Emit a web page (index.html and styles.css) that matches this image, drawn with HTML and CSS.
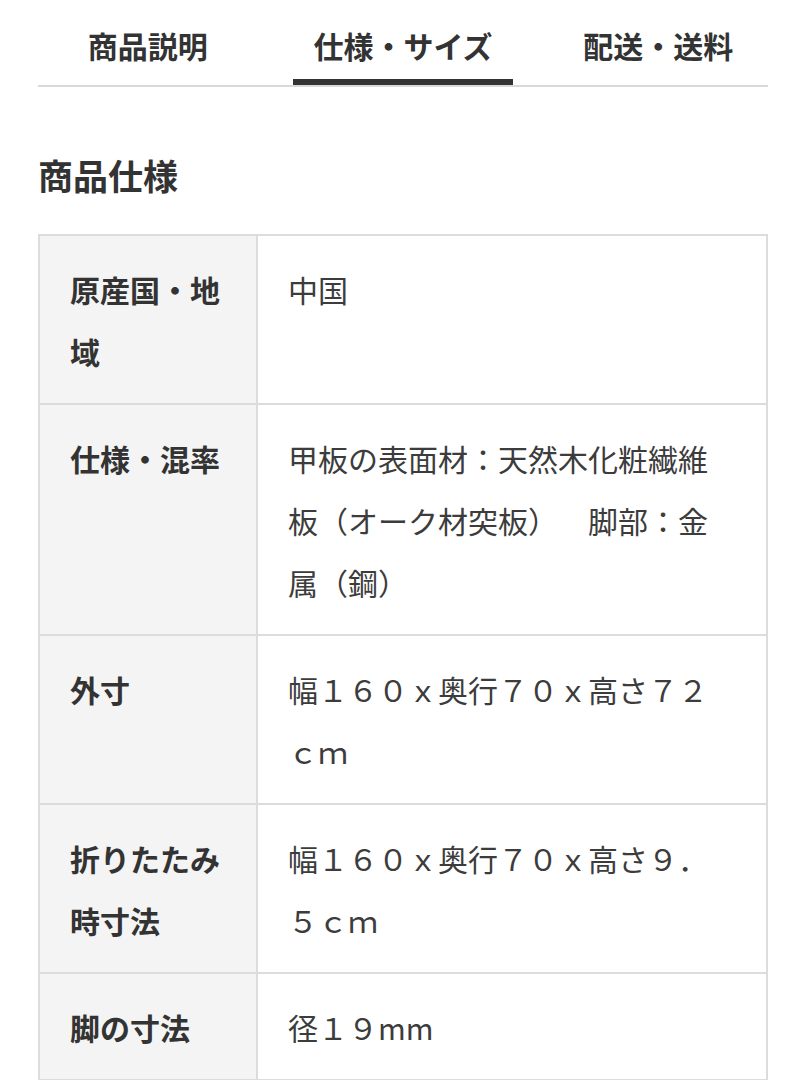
FILE: index.html
```html
<!DOCTYPE html>
<html lang="ja">
<head>
<meta charset="utf-8">
<title>商品仕様</title>
<link rel="stylesheet" href="styles.css">
</head>
<body>
<div class="page">
  <nav class="tabs">
    <div class="tab">商品説明</div>
    <div class="tab active">仕様・サイズ</div>
    <div class="tab">配送・送料</div>
  </nav>
  <h2 class="heading">商品仕様</h2>
  <div class="spec">
    <div class="label">原産国・地域</div>
    <div class="value">中国</div>
    <div class="label">仕様・混率</div>
    <div class="value">甲板の表面材：天然木化粧繊維板（オーク材突板）　脚部：金属（鋼）</div>
    <div class="label">外寸</div>
    <div class="value">幅１６０ｘ奥行７０ｘ高さ７２ｃｍ</div>
    <div class="label">折りたたみ時寸法</div>
    <div class="value">幅１６０ｘ奥行７０ｘ高さ９．５ｃｍ</div>
    <div class="label">脚の寸法</div>
    <div class="value">径１９mm</div>
  </div>
</div>
</body>
</html>
```

FILE: styles.css
```css
html, body {
  margin: 0;
  padding: 0;
  background: #ffffff;
}

body {
  font-family: "Noto Sans CJK JP", "Noto Sans", sans-serif;
  color: #333333;
  text-spacing-trim: space-all;
}

.page {
  padding: 0 38px;
}

.tabs {
  display: grid;
  grid-template-columns: repeat(3, 1fr);
  column-gap: 36px;
  border-bottom: 2px solid #d9d9d9;
}

.tab {
  height: 66px;
  padding-top: 12px;
  padding-bottom: 1px;
  display: flex;
  align-items: center;
  justify-content: center;
  font-size: 30px;
  font-weight: 700;
  color: #333333;
  border-bottom: 6px solid transparent;
}

.tab.active {
  border-bottom-color: #333333;
}

.heading {
  margin: 63px 0 0;
  height: 84px;
  line-height: 50px;
  font-size: 35px;
  font-weight: 700;
  color: #333333;
}

.spec {
  display: grid;
  grid-template-columns: 218px 1fr;
  border-top: 2px solid #dcdcdc;
  border-left: 2px solid #dcdcdc;
}

.label,
.value {
  border-right: 2px solid #dcdcdc;
  border-bottom: 2px solid #dcdcdc;
  padding-top: 22px;
  padding-bottom: 21px;
  line-height: 62px;
}

.label {
  background: #f4f4f4;
  font-size: 30px;
  font-weight: 700;
  padding-left: 30px;
  padding-right: 20px;
  color: #333333;
}

.value {
  font-size: 30px;
  font-weight: 400;
  padding-left: 30px;
  padding-right: 40px;
  color: #3c3c3c;
  text-spacing-trim: space-all;
}
```
